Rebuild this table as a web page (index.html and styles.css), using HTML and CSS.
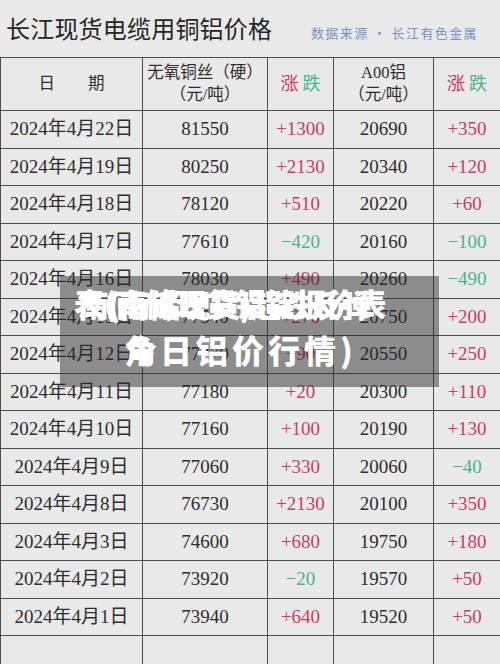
FILE: index.html
```html
<!DOCTYPE html>
<html lang="zh">
<head>
<meta charset="utf-8">
<link rel="stylesheet" href="styles.css">
</head>
<body>
<div class="page">
  <header class="top">
    <h1 class="title">长江现货电缆用铜铝价格</h1>
    <div class="source">数据来源 · 长江有色金属</div>
  </header>
  <table class="prices">
    <colgroup>
      <col class="c1"><col class="c2"><col class="c3"><col class="c4"><col class="c5">
    </colgroup>
    <thead>
      <tr>
        <th>日　　期</th>
        <th>无氧铜丝（硬）<br>（元/吨）</th>
        <th><span class="up">涨</span> <span class="down">跌</span></th>
        <th>A00铝<br>（元/吨）</th>
        <th><span class="up">涨</span> <span class="down">跌</span></th>
      </tr>
    </thead>
    <tbody>
      <tr><td>2024年4月22日</td><td>81550</td><td class="up">+1300</td><td>20690</td><td class="up">+350</td></tr>
      <tr><td>2024年4月19日</td><td>80250</td><td class="up">+2130</td><td>20340</td><td class="up">+120</td></tr>
      <tr><td>2024年4月18日</td><td>78120</td><td class="up">+510</td><td>20220</td><td class="up">+60</td></tr>
      <tr><td>2024年4月17日</td><td>77610</td><td class="down">−420</td><td>20160</td><td class="down">−100</td></tr>
      <tr><td>2024年4月16日</td><td>78030</td><td class="up">+490</td><td>20260</td><td class="down">−490</td></tr>
      <tr><td>2024年4月15日</td><td>77540</td><td class="up">+270</td><td>20750</td><td class="up">+200</td></tr>
      <tr><td>2024年4月12日</td><td>77270</td><td class="up">+90</td><td>20550</td><td class="up">+250</td></tr>
      <tr><td>2024年4月11日</td><td>77180</td><td class="up">+20</td><td>20300</td><td class="up">+110</td></tr>
      <tr><td>2024年4月10日</td><td>77160</td><td class="up">+100</td><td>20190</td><td class="up">+130</td></tr>
      <tr><td>2024年4月9日</td><td>77060</td><td class="up">+330</td><td>20060</td><td class="down">−40</td></tr>
      <tr><td>2024年4月8日</td><td>76730</td><td class="up">+2130</td><td>20100</td><td class="up">+350</td></tr>
      <tr><td>2024年4月3日</td><td>74600</td><td class="up">+680</td><td>19750</td><td class="up">+180</td></tr>
      <tr><td>2024年4月2日</td><td>73920</td><td class="down">−20</td><td>19570</td><td class="up">+50</td></tr>
      <tr><td>2024年4月1日</td><td>73940</td><td class="up">+640</td><td>19520</td><td class="up">+50</td></tr>
      <tr class="empty"><td></td><td></td><td></td><td class="faint"></td><td class="faint"></td></tr>
    </tbody>
  </table>
  <div class="overlay">
    <div class="line line1">
      <span class="layer">表(南储现货铝锭报价表</span>
      <span class="layer shift">南(南储现货)超跌反弹</span>
    </div>
    <div class="line line2">
      <span class="layer">角日铝价行情)</span>
      <span class="layer shift2">今</span>
    </div>
  </div>
</div>
</body>
</html>
```

FILE: styles.css
```css
html, body {
  margin: 0;
  padding: 0;
  background: #e9e9e9;
}
.page {
  position: relative;
  width: 500px;
  height: 664px;
  overflow: hidden;
  background: #e9e9e9;
}
.top {
  height: 57px;
  display: flex;
  align-items: center;
  justify-content: space-between;
  padding: 4px 22px 0 6px;
  box-sizing: border-box;
}
.title {
  margin: 0;
  font-family: "Noto Sans CJK SC", sans-serif;
  font-weight: 400;
  font-size: 24px;
  letter-spacing: 0.2px;
  color: #262626;
  line-height: 1;
  margin-top: -6px;
}
.source {
  font-family: "Noto Sans CJK SC", sans-serif;
  font-size: 13px;
  letter-spacing: 1.4px;
  color: #7595c4;
  margin-top: 4px;
}
.prices {
  border-collapse: collapse;
  table-layout: fixed;
  width: 500px;
  font-family: "Liberation Serif", "Noto Sans CJK SC", serif;
  color: #2e2e2e;
}
.c1 { width: 142px; }
.c2 { width: 125px; }
.c3 { width: 66px; }
.c4 { width: 100px; }
.c5 { width: 67px; }
.prices th, .prices td {
  border: 1px solid #4d4d4d;
  text-align: center;
  padding: 0;
}
.prices th {
  height: 52px;
  font-weight: 400;
  font-size: 16.5px;
  line-height: 22px;
}
.prices td {
  height: 36.5px;
  font-size: 19px;
  line-height: 20px;
}
.prices tr.empty td {
  height: 40px;
}
.prices td.faint {
  border-left-color: #9a9ab8;
}
.prices th .up, .prices th .down {
  font-size: 18px;
}
.up { color: #c9405d; }
.down { color: #4fb386; }
.overlay {
  position: absolute;
  left: 60px;
  top: 276px;
  width: 379px;
  height: 111px;
  background: rgba(40, 40, 40, 0.48);
}
.line {
  position: absolute;
  font-family: "Noto Sans CJK SC", sans-serif;
  font-weight: 900;
  color: #ffffff;
  white-space: nowrap;
  line-height: 1;
}
.line1 {
  left: 14px;
  top: 11px;
  font-size: 31px;
  letter-spacing: -1px;
}
.line2 {
  left: 64px;
  top: 57px;
  font-size: 32px;
  letter-spacing: 4px;
}
.layer {
  position: absolute;
  left: 0;
  top: 0;
}
.line2 .layer { position: relative; }
.line2 .shift2 {
  position: absolute;
  left: 1px;
  top: 0;
}
.shift {
  left: 4px;
  top: 1px;
}
```
